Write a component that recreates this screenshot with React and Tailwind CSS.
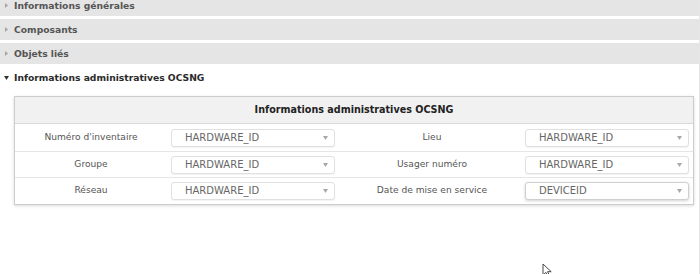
import React from "react";

const font = { fontFamily: '"DejaVu Sans", Verdana, sans-serif' };

function Bar({ label }) {
  return (
    <div className="h-[21px] bg-[#e5e5e5] flex items-center pl-[5px] gap-[6px]">
      <svg width="3" height="5" viewBox="0 0 3 5">
        <path d="M0 0 L3 2.5 L0 5 Z" fill="#a5a5a5" />
      </svg>
      <span className="text-[9.2px] font-bold text-[#555]">{label}</span>
    </div>
  );
}

function Select({ value, active }) {
  return (
    <div
      className={`w-[164px] h-[18px] rounded-[3px] border bg-white flex items-center justify-between pl-[13px] pr-[6px] ${
        active ? "border-[#cfcfcf] shadow-[0_1px_3px_rgba(0,0,0,0.18)]" : "border-[#e0e0e0] shadow-[0_1px_1px_rgba(0,0,0,0.05)]"
      }`}
    >
      <span className="text-[10px] text-[#666] leading-none">{value}</span>
      <svg width="5" height="4" viewBox="0 0 5 4">
        <path d="M0 0 L5 0 L2.5 4 Z" fill="#a8a8a8" />
      </svg>
    </div>
  );
}

function Row({ l1, v1, l2, v2, active2, last, h }) {
  return (
    <div
      className={`grid grid-cols-[152px_175px_180px_1fr] ${h} items-center ${
        last ? "" : "border-b border-[#e6e6e6]"
      }`}
    >
      <div className="text-center text-[9.1px] text-[#555]">{l1}</div>
      <div className="pl-[4px]">
        <Select value={v1} />
      </div>
      <div className="text-center text-[9.1px] text-[#555]">{l2}</div>
      <div className="pl-[3px]">
        <Select value={v2} active={active2} />
      </div>
    </div>
  );
}

export default function App() {
  return (
    <div
      className="w-[700px] h-[274px] bg-white overflow-hidden relative border-r border-[#e6e6e6]"
      style={font}
    >
      <div className="flex flex-col gap-[3px] mt-[-5px]">
        <Bar label="Informations générales" />
        <Bar label="Composants" />
        <Bar label="Objets liés" />
        <div className="h-[21px] flex items-center pl-[4px] gap-[5px]">
          <svg width="5" height="4" viewBox="0 0 5 4">
            <path d="M0 0 L5 0 L2.5 4 Z" fill="#333" />
          </svg>
          <span className="text-[9.2px] font-bold text-[#2a2a2a]">
            Informations administratives OCSNG
          </span>
        </div>
      </div>
      <div className="ml-[14px] mt-[8px] w-[680px] border border-[#cccccc] shadow-[0_1px_3px_rgba(0,0,0,0.15)] bg-white">
        <div className="h-[27px] bg-[#f1f1f1] border-b border-[#d9d9d9] flex items-center justify-center">
          <span className="text-[9.6px] font-bold text-[#222]">
            Informations administratives OCSNG
          </span>
        </div>
        <Row h="h-[28px]" l1="Numéro d'inventaire" v1="HARDWARE_ID" l2="Lieu" v2="HARDWARE_ID" />
        <Row h="h-[26px]" l1="Groupe" v1="HARDWARE_ID" l2="Usager numéro" v2="HARDWARE_ID" />
        <Row
          h="h-[26px]"
          l1="Réseau"
          v1="HARDWARE_ID"
          l2="Date de mise en service"
          v2="DEVICEID"
          active2
          last
        />
      </div>
      <svg
        className="absolute left-[542px] top-[263px]"
        width="12"
        height="14"
        viewBox="0 0 12 14"
      >
        <path
          d="M1 1 L1 12 L3.8 9.4 L6 13.5 L7.6 12.7 L5.5 8.7 L9.2 8.7 Z"
          fill="white"
          stroke="#333"
          strokeWidth="0.9"
          strokeLinejoin="round"
        />
      </svg>
    </div>
  );
}
